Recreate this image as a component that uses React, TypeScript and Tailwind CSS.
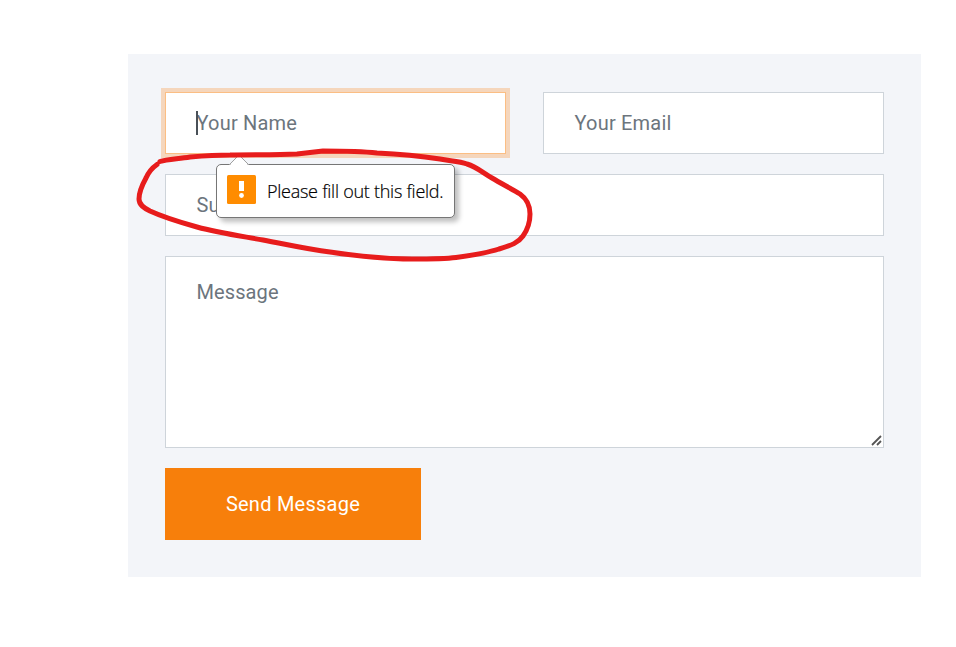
import type { ReactNode } from "react";

const fieldBase =
  "relative flex w-full border bg-white pl-[31px] font-[Roboto,sans-serif] text-[20px] leading-[24px] text-[#6c757d]";

function Field({
  label,
  focused = false,
  children,
}: {
  label: string;
  focused?: boolean;
  children?: ReactNode;
}) {
  return (
    <div
      className={`${fieldBase} h-[62px] items-center ${
        focused ? "border-[#fbbe84] shadow-[0_0_0_4px_#f5d6bc]" : "border-[#ced4da]"
      }`}
    >
      {focused && <span className="absolute left-[30px] top-[18px] h-6 w-[2px] bg-[#495057]" />}
      <span className="-ml-[0.5px] whitespace-nowrap tracking-[0.2px]">{label}</span>
      {children}
    </div>
  );
}

function ValidationTip() {
  return (
    <div className="absolute left-[50px] top-[71px] z-10 flex h-[54px] w-[239px] items-center rounded-[5px] border border-[#767676] bg-white pl-[10px] shadow-[4px_4px_5px_rgba(0,0,0,0.25)]">
      <svg className="absolute left-[11px] top-[-10px]" width="22" height="11" viewBox="0 0 22 11">
        <path d="M1 11 L10 1.5 H12 L21 11Z" fill="white" />
        <path d="M1 10 L10 1 H12 L21 10" fill="none" stroke="#a0a0a0" />
      </svg>
      <svg className="-mt-[4px] shrink-0" width="29" height="29" viewBox="0 0 29 29">
        <rect width="29" height="29" rx="1.5" fill="#ff8c00" />
        <path d="M12 6h5v10h-5z" fill="white" />
        <circle cx="14.5" cy="20.5" r="2.4" fill="white" />
      </svg>
      <span className="ml-[11px] whitespace-nowrap font-['Open_Sans','Noto_Sans',sans-serif] text-[18px] font-light leading-6 tracking-[-0.26px] text-black [-webkit-text-stroke:0.2px_black]">
        Please fill out this field.
      </span>
    </div>
  );
}

export default function App() {
  return (
    <main className="relative h-[647px] w-[956px] overflow-hidden bg-white pl-[128px] pt-[54px]">
      <form className="flex h-[523px] w-[793px] flex-col gap-5 bg-[#f3f5f9] px-[37px] pt-[38px]">
        <div className="grid grid-cols-2 gap-[37px]">
          <Field label="Your Name" focused>
            <ValidationTip />
          </Field>
          <Field label="Your Email" />
        </div>
        <Field label="Subject" />
        <div className={`${fieldBase} h-[192px] items-start border-[#ced4da] pt-[23px]`}>
          <span className="-ml-[0.5px] tracking-[0.1px]">Message</span>
          <svg
            className="absolute bottom-[1px] right-[1px]"
            width="11"
            height="11"
            viewBox="0 0 11 11"
            fill="none"
            stroke="#555"
            strokeWidth="1.8"
          >
            <path d="M1 10 10 1M6 10l4-4" />
          </svg>
        </div>
        <button
          type="button"
          className="h-[72px] w-[256px] bg-[#f77f0b] font-[Roboto,sans-serif] text-[20px] font-[450] leading-6 tracking-[0.25px] text-white"
        >
          Send Message
        </button>
      </form>
      <svg
        className="pointer-events-none absolute left-0 top-0 z-20"
        width="956"
        height="647"
        viewBox="0 0 956 647"
        fill="none"
        stroke="#e71c1c"
        strokeWidth="5"
        strokeLinecap="round"
        strokeLinejoin="round"
      >
        <path d="M157 164.500 C152 168 149 171 146 178 C141 187 139 194 139 199 C139 205 144 208 150 211 C163 217 179 222 197 227 C219 233 241 236 263 240 C285 244 306 249 330 252 C357 256 385 259 412 259 C433 259 444 259 456 257.500 C474 255 487 253 499 249 C512 245 518 243 523 236 C528 229 530 222 530 214 C530 206 527 199 520 194 C512 189 502 184 492 178 C483 173 477 167 467 164 C459 161 450 161 440 159 C420 156 398 154 377 153 C359 151 341 151 323 151 C314 152 306 153 297 154 C275 155 252 154.500 230 155 C216 155 202 156 190 157 C178 159 167 159 160 161.500" />
      </svg>
    </main>
  );
}
